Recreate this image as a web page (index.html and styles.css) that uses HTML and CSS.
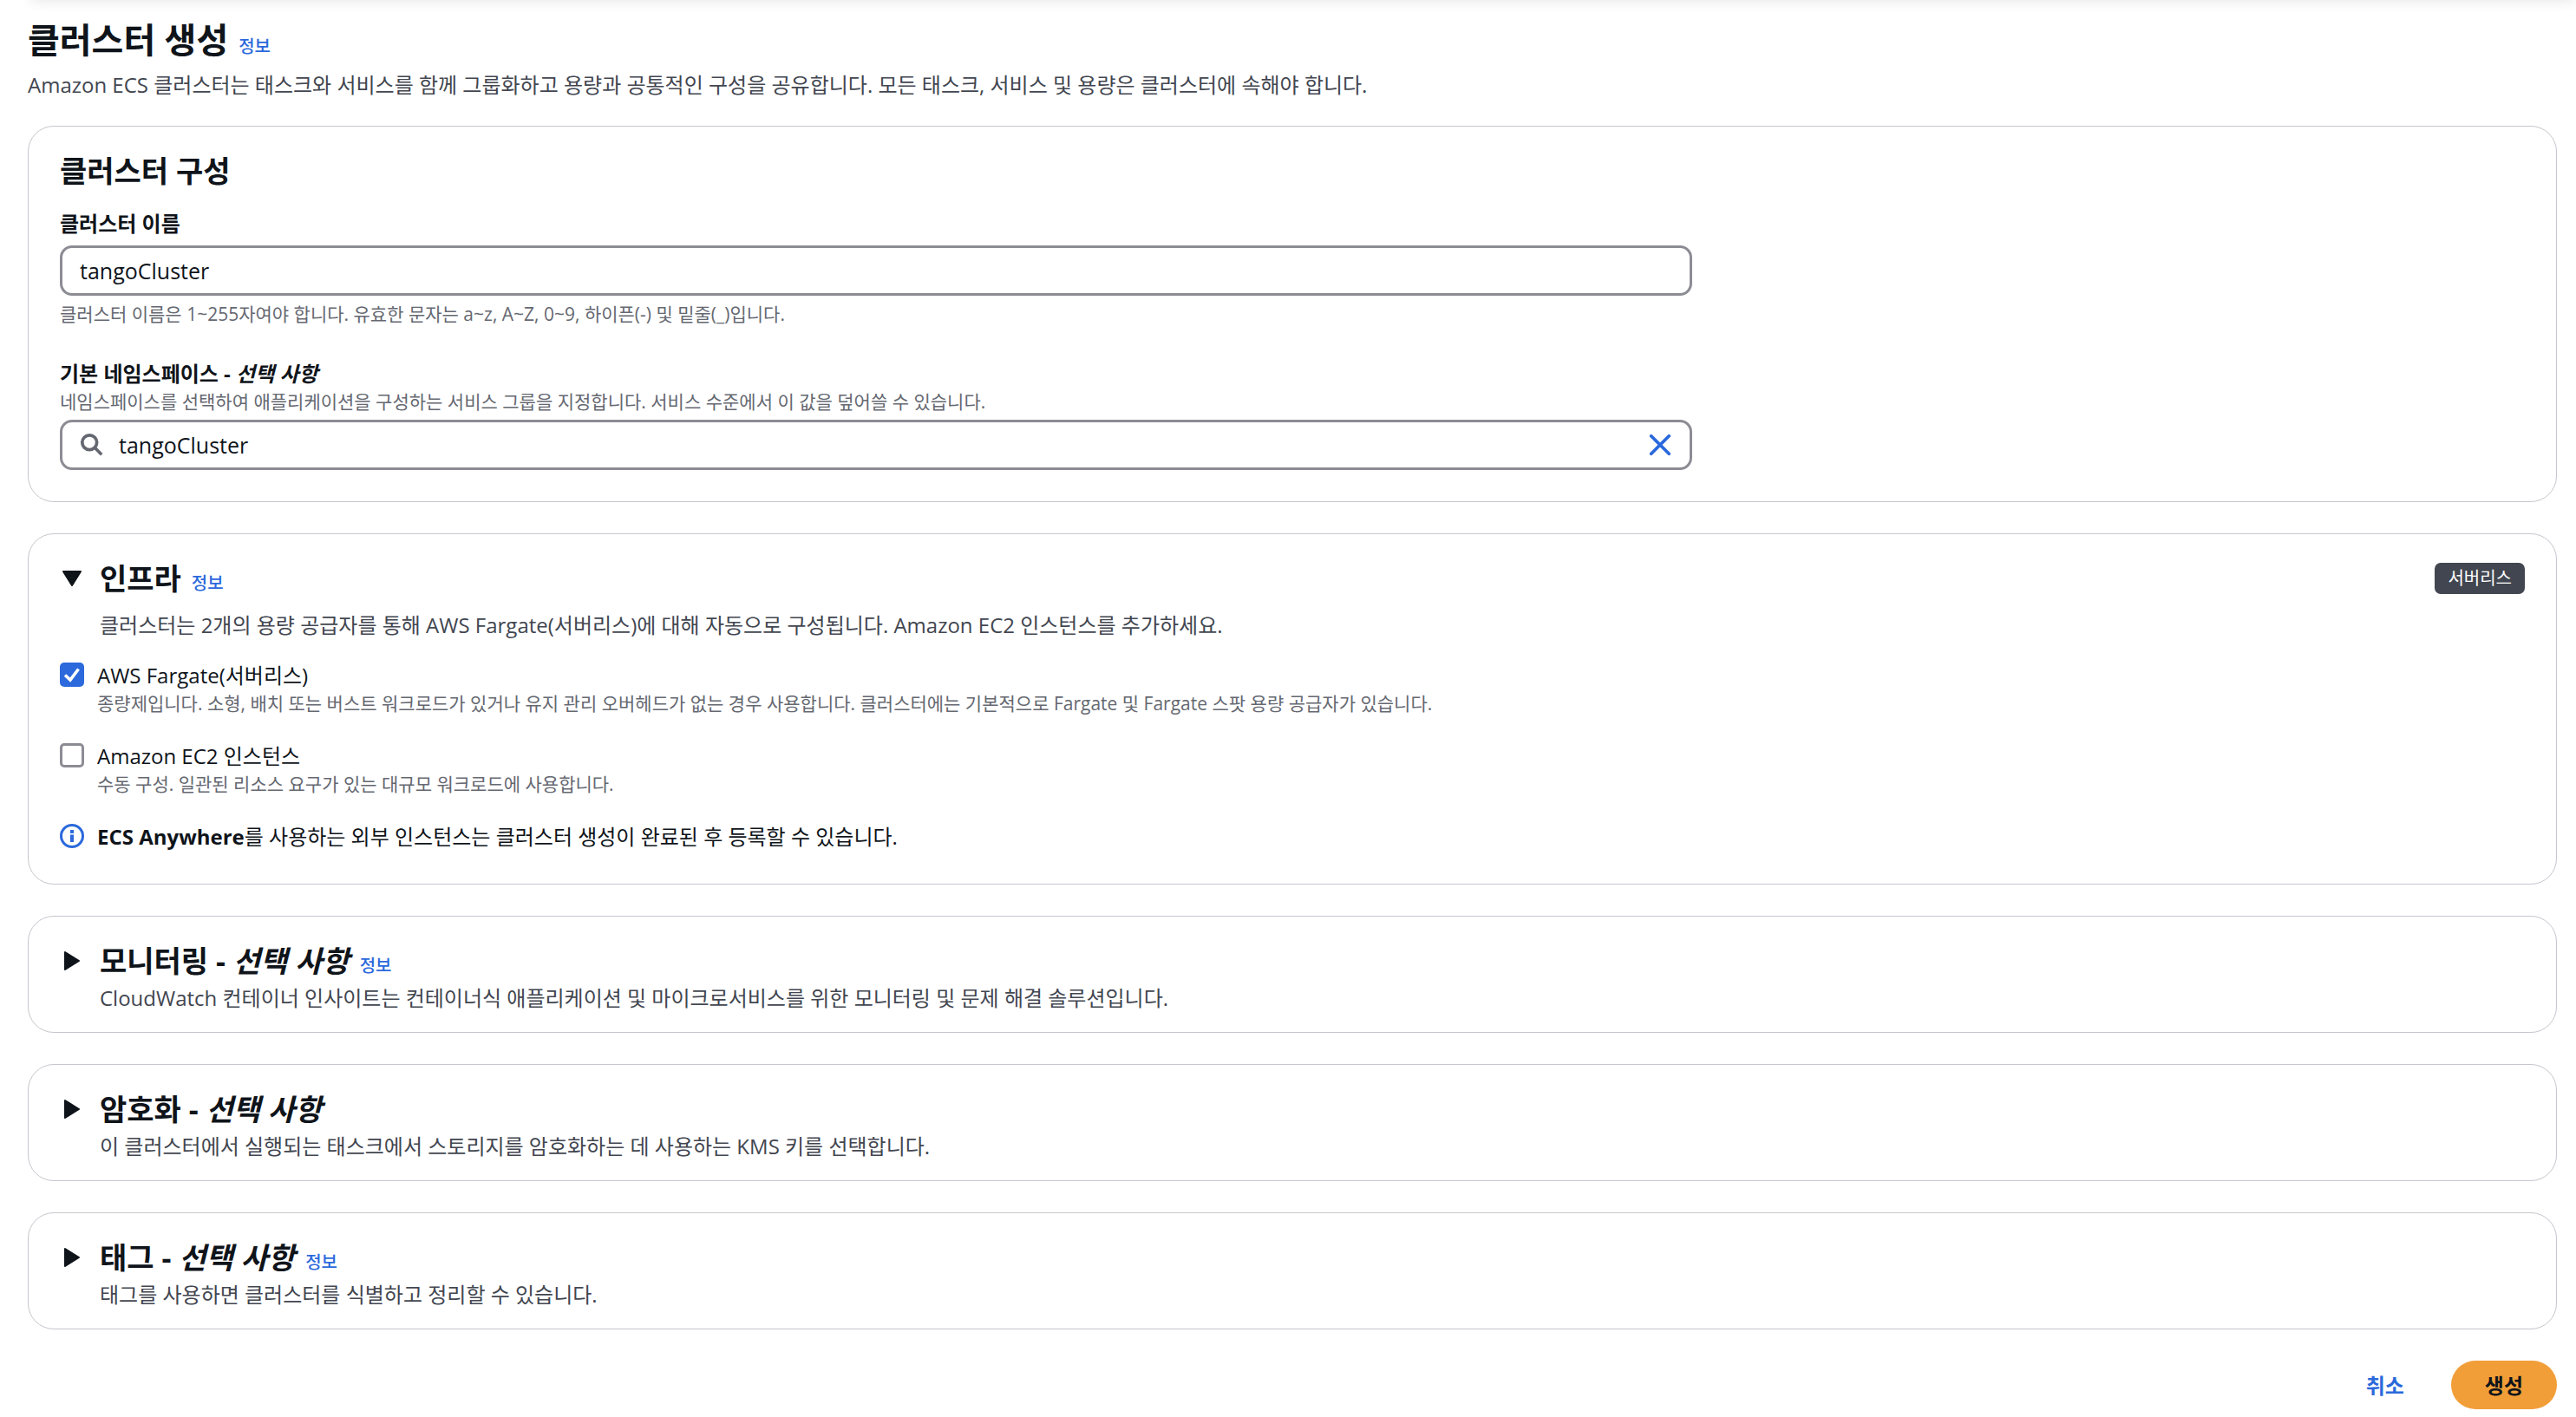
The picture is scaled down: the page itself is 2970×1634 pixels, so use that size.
FILE: index.html
```html
<!DOCTYPE html>
<html lang="ko">
<head>
<meta charset="utf-8">
<meta name="viewport" content="width=device-width, initial-scale=1">
<title>클러스터 생성</title>
<link rel="stylesheet" href="styles.css">
</head>
<body>
<div class="top-shadow"></div>
<main class="page">
  <header class="page-header">
    <div class="title-row">
      <h1>클러스터 생성</h1>
      <a class="info" href="#">정보</a>
    </div>
    <p class="description">Amazon ECS 클러스터는 태스크와 서비스를 함께 그룹화하고 용량과 공통적인 구성을 공유합니다. 모든 태스크, 서비스 및 용량은 클러스터에 속해야 합니다.</p>
  </header>

  <form class="stack">
    <section class="card">
      <h2>클러스터 구성</h2>
      <div class="form-grid">
        <div class="field">
          <label class="field-label" for="name">클러스터 이름</label>
          <div class="text-box"><input id="name" type="text" value="tangoCluster" aria-describedby="name-hint"></div>
          <p class="hint constraint" id="name-hint">클러스터 이름은 1~255자여야 합니다. 유효한 문자는 a~z, A~Z, 0~9, 하이픈(-) 및 밑줄(_)입니다.</p>
        </div>
        <div class="field">
          <label class="field-label" for="namespace">기본 네임스페이스 - <i>선택 사항</i></label>
          <p class="hint" id="namespace-hint">네임스페이스를 선택하여 애플리케이션을 구성하는 서비스 그룹을 지정합니다. 서비스 수준에서 이 값을 덮어쓸 수 있습니다.</p>
          <div class="text-box">
            <svg class="icon" viewBox="0 0 30 30" aria-hidden="true"><circle cx="12" cy="12" r="9" /><path d="M18.500 18.500 27 27" /></svg>
            <input id="namespace" type="text" value="tangoCluster" aria-describedby="namespace-hint">
            <button class="clear" type="button" aria-label="지우기"><svg class="icon" viewBox="0 0 30 30" aria-hidden="true"><path d="M4 4 26 26M26 4 4 26" /></svg></button>
          </div>
        </div>
      </div>
    </section>

    <section class="card">
      <div class="section-header">
        <button class="toggle" type="button" aria-expanded="true" aria-label="인프라"><svg class="caret open" viewBox="0 0 28 28" aria-hidden="true"><path d="M6 4 22 14 6 24Z" /></svg></button>
        <div class="title-row">
          <h2>인프라</h2>
          <a class="info" href="#">정보</a>
        </div>
        <span class="badge">서버리스</span>
      </div>
      <p class="description indented spaced">클러스터는 2개의 용량 공급자를 통해 AWS Fargate(서버리스)에 대해 자동으로 구성됩니다. Amazon EC2 인스턴스를 추가하세요.</p>
      <div class="options">
        <div class="option">
          <input class="check" type="checkbox" id="fargate" checked>
          <div>
            <label for="fargate">AWS Fargate(서버리스)</label>
            <p class="hint">종량제입니다. 소형, 배치 또는 버스트 워크로드가 있거나 유지 관리 오버헤드가 없는 경우 사용합니다. 클러스터에는 기본적으로 Fargate 및 Fargate 스팟 용량 공급자가 있습니다.</p>
          </div>
        </div>
        <div class="option">
          <input class="check" type="checkbox" id="ec2">
          <div>
            <label for="ec2">Amazon EC2 인스턴스</label>
            <p class="hint">수동 구성. 일관된 리소스 요구가 있는 대규모 워크로드에 사용합니다.</p>
          </div>
        </div>
        <div class="option">
          <svg class="status" viewBox="0 0 28 28" aria-hidden="true"><circle cx="14" cy="14" r="12.500" /><path d="M12 7h4v4h-4zM12 12.500h4V21h-4z" /></svg>
          <p><b>ECS Anywhere</b>를 사용하는 외부 인스턴스는 클러스터 생성이 완료된 후 등록할 수 있습니다.</p>
        </div>
      </div>
    </section>

    <section class="card collapsed">
      <div class="section-header">
        <button class="toggle" type="button" aria-expanded="false" aria-label="모니터링"><svg class="caret" viewBox="0 0 28 28" aria-hidden="true"><path d="M6 4 22 14 6 24Z" /></svg></button>
        <div class="title-row">
          <h2>모니터링 - <i>선택 사항</i></h2>
          <a class="info" href="#">정보</a>
        </div>
      </div>
      <p class="description indented">CloudWatch 컨테이너 인사이트는 컨테이너식 애플리케이션 및 마이크로서비스를 위한 모니터링 및 문제 해결 솔루션입니다.</p>
    </section>

    <section class="card collapsed">
      <div class="section-header">
        <button class="toggle" type="button" aria-expanded="false" aria-label="암호화"><svg class="caret" viewBox="0 0 28 28" aria-hidden="true"><path d="M6 4 22 14 6 24Z" /></svg></button>
        <div class="title-row">
          <h2>암호화 - <i>선택 사항</i></h2>
        </div>
      </div>
      <p class="description indented">이 클러스터에서 실행되는 태스크에서 스토리지를 암호화하는 데 사용하는 KMS 키를 선택합니다.</p>
    </section>

    <section class="card collapsed">
      <div class="section-header">
        <button class="toggle" type="button" aria-expanded="false" aria-label="태그"><svg class="caret" viewBox="0 0 28 28" aria-hidden="true"><path d="M6 4 22 14 6 24Z" /></svg></button>
        <div class="title-row">
          <h2>태그 - <i>선택 사항</i></h2>
          <a class="info" href="#">정보</a>
        </div>
      </div>
      <p class="description indented">태그를 사용하면 클러스터를 식별하고 정리할 수 있습니다.</p>
    </section>

    <div class="actions">
      <button class="button link" type="button">취소</button>
      <button class="button primary" type="submit">생성</button>
    </div>
  </form>
</main>
</body>
</html>
```

FILE: styles.css
```css
:root {
  --text: #0f141a;
  --text-body: #424650;
  --text-hint: #656871;
  --border: #c6c6cd;
  --control: #8c8c94;
  --blue: #2b69dc;
  --orange: #f29e38;
}

* {
  box-sizing: border-box;
}

body {
  margin: 0;
  overflow-x: hidden;
  background: #fff;
  color: var(--text);
  font-family: "Open Sans", "Noto Sans CJK KR", sans-serif;
  font-size: 24px;
  line-height: 37px;
}

h1,
h2,
p {
  margin: 0;
}

h1 {
  font-size: 40px;
  line-height: 56px;
}

h2 {
  font-size: 34px;
  line-height: 44px;
}

button,
input {
  font: inherit;
  color: inherit;
}

button {
  border: 0;
  background: none;
  cursor: pointer;
}

/* Shade cast by the bar that sits above the scrolled content. */
.top-shadow {
  position: absolute;
  top: -20px;
  left: 36px;
  right: 0;
  height: 20px;
  box-shadow: 0 1px 16px rgba(0, 7, 22, 0.1);
}

.page {
  padding: 18px 22px 8px 32px;
}

.page-header {
  display: grid;
  gap: 5px;
  margin-bottom: 29px;
}

.title-row {
  display: flex;
  align-items: baseline;
  gap: 12px;
}

.info {
  color: var(--blue);
  font-size: 20px;
  line-height: 28px;
  font-weight: 500;
  text-decoration: none;
}

.description {
  color: var(--text-body);
}

.hint {
  color: var(--text-hint);
  font-size: 21px;
  line-height: 28px;
}

.constraint {
  margin-top: 7px;
}

.stack {
  display: grid;
  gap: 36px;
}

.card {
  padding: 29px 36px 36px;
  border: 1px solid var(--border);
  border-radius: 30px;
}

.collapsed {
  padding-bottom: 21px;
}

.form-grid {
  display: grid;
  grid-template-columns: repeat(3, 1fr);
  column-gap: 37px;
  row-gap: 36px;
  margin-top: 20px;
}

.field {
  grid-column: 1 / span 2;
}

.field-label {
  display: block;
  font-weight: 700;
}

.text-box {
  display: flex;
  align-items: center;
  gap: 17px;
  height: 58px;
  margin-top: 7px;
  padding: 0 20px;
  border: 3px solid var(--control);
  border-radius: 14px;
}

.text-box input {
  flex: 1;
  min-width: 0;
  padding: 0;
  border: 0;
  outline: 0;
  background: none;
  font-size: 25px;
}

.icon {
  display: block;
  width: 28px;
  height: 28px;
  fill: none;
  stroke: var(--text-hint);
  stroke-width: 4;
}

.clear {
  padding: 0;
}

.clear .icon {
  stroke: var(--blue);
  stroke-linecap: round;
}

.section-header {
  display: flex;
  align-items: center;
}

.toggle {
  display: flex;
  width: 46px;
  padding: 0;
}

.caret {
  width: 28px;
  height: 28px;
  fill: var(--text);
  stroke: var(--text);
  stroke-width: 2;
  stroke-linejoin: round;
}

.open {
  transform: rotate(90deg);
}

.indented {
  margin-top: 2px;
  padding-left: 46px;
}

.spaced {
  margin-top: 13px;
}

.badge {
  margin-left: auto;
  padding: 0 15px;
  border-radius: 7px;
  background: var(--text-body);
  color: #fff;
  font-size: 20px;
  line-height: 36px;
}

.options {
  display: grid;
  gap: 28px;
  margin-top: 21px;
}

.option {
  display: grid;
  grid-template-columns: 28px 1fr;
  column-gap: 15px;
  align-items: start;
}

.check {
  appearance: none;
  width: 28px;
  height: 28px;
  margin: 4px 0 0;
  border: 3px solid var(--control);
  border-radius: 5px;
}

.check:checked {
  border: 0;
  background: var(--blue) url("data:image/svg+xml,%3Csvg xmlns='http://www.w3.org/2000/svg' viewBox='0 0 28 28'%3E%3Cpath d='M6 14.500l6 5.500 9.500-12.500' fill='none' stroke='white' stroke-width='3.600'/%3E%3C/svg%3E");
}

.status {
  width: 28px;
  height: 28px;
  margin-top: 4px;
  fill: var(--blue);
}

.status circle {
  fill: none;
  stroke: var(--blue);
  stroke-width: 3;
}

.actions {
  display: flex;
  justify-content: flex-end;
  gap: 15px;
}

.button {
  height: 56px;
  padding: 0 39px;
  border-radius: 28px;
  font-weight: 700;
}

.link {
  color: var(--blue);
}

.primary {
  background: var(--orange);
}
```
